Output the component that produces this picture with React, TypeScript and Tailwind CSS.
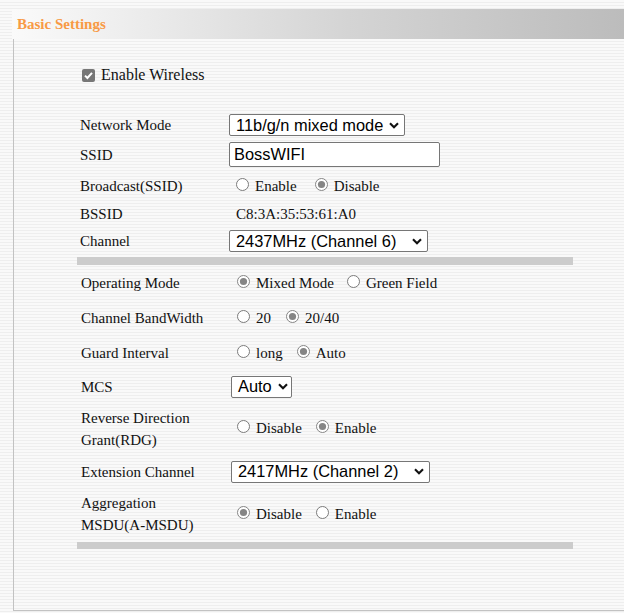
const serif = "font-['Liberation_Serif','Times_New_Roman',serif]";
const sans = "font-['Liberation_Sans',Arial,sans-serif]";

type Opt = { label: string; checked?: boolean; gap?: string };

function Radio({ checked }: { checked?: boolean }) {
  return (
    <svg width="13" height="13" viewBox="0 0 13 13" className="mb-[2px] inline-block shrink-0">
      <circle cx="6.5" cy="6.5" r="6" fill="#fff" stroke={checked ? "#858585" : "#7a7a7a"} />
      {checked ? <circle cx="6.5" cy="6.5" r="3.6" fill="#858585" /> : null}
    </svg>
  );
}

function Radios({ opts, start = "ml-[6px]" }: { opts: Opt[]; start?: string }) {
  return (
    <div className={`flex items-baseline ${start}`}>
      {opts.map((o, i) => (
        <span key={o.label} className={`flex items-baseline ${i > 0 ? o.gap : ""}`}>
          <Radio checked={o.checked} />
          <span className="ml-[6px]">{o.label}</span>
        </span>
      ))}
    </div>
  );
}

function Select({ value, w }: { value: string; w: string }) {
  return (
    <div
      className={`flex h-[22px] items-center justify-between rounded-[2px] border border-[#767676] bg-white pl-[6px] pr-[5px] text-[16.4px] text-black ${sans} ${w}`}
    >
      <span className="whitespace-nowrap leading-none">{value}</span>
      <svg width="10" height="7" viewBox="0 0 10 7" className="ml-[6px] shrink-0">
        <path d="M1 1.3 L5 5.3 L9 1.3" fill="none" stroke="#111" strokeWidth="2.1" />
      </svg>
    </div>
  );
}

function Row({
  h,
  label,
  children,
  second,
}: {
  h: string;
  label: React.ReactNode;
  children: React.ReactNode;
  second?: boolean;
}) {
  return (
    <div className={`flex items-center ${h} ${second ? "pl-[67px]" : "pl-[66px]"}`}>
      <div className={`shrink-0 leading-[22px] ${second ? "w-[150px]" : "w-[149px]"}`}>{label}</div>
      {children}
    </div>
  );
}

export default function App() {
  return (
    <div
      className={`h-[613px] w-[624px] overflow-hidden bg-[repeating-linear-gradient(180deg,#f9f9f9_0px,#f9f9f9_2px,#eeeeee_2px,#eeeeee_3px)] pt-[9px] ${serif}`}
    >
      <div className="ml-[12px] h-[30px] bg-[linear-gradient(90deg,#fafafa_0%,#f0f0f0_15%,#d4d4d4_55%,#bcbcbc_100%)] pl-[5px] text-[15px] font-bold leading-[30px] text-[#f89a45]">
        Basic Settings
      </div>

      <div className="ml-[13px] h-[572px] border-b border-l border-[#c2c2c2] pt-[21px] text-[15px] text-[#111]">
        <div className="flex h-[30px] items-center pl-[68px]">
          <span className="flex h-[13px] w-[13px] items-center justify-center rounded-[2px] bg-[#777777]">
            <svg width="11" height="11" viewBox="0 0 11 11">
              <path d="M2 5.6 L4.4 8 L9 2.8" fill="none" stroke="#fff" strokeWidth="2" />
            </svg>
          </span>
          <span className="ml-[6px] text-[16px]">Enable Wireless</span>
        </div>

        <div className="mt-[21px]">
          <Row h="h-[28px]" label="Network Mode">
            <Select value="11b/g/n mixed mode" w="w-[176px]" />
          </Row>
          <Row h="h-[31px]" label="SSID">
            <div
              className={`flex h-[25px] w-[211px] items-center rounded-[2px] border border-[#767676] bg-white pl-[4px] text-[16.4px] text-black ${sans}`}
            >
              BossWIFI
            </div>
          </Row>
          <Row h="h-[32px]" label="Broadcast(SSID)">
            <Radios
              start="ml-[7px]"
              opts={[
                { label: "Enable" },
                { label: "Disable", checked: true, gap: "ml-[18px]" },
              ]}
            />
          </Row>
          <Row h="h-[24px]" label="BSSID">
            <span className="ml-[7px]">C8:3A:35:53:61:A0</span>
          </Row>
          <Row h="h-[30px]" label="Channel">
            <Select value="2437MHz (Channel 6)" w="w-[199px]" />
          </Row>
        </div>

        <div className="ml-[63px] mt-[1px] h-[8px] w-[496px] bg-[#cccccc]" />

        <Row second h="h-[36px]" label="Operating Mode">
          <Radios
            opts={[
              { label: "Mixed Mode", checked: true },
              { label: "Green Field", gap: "ml-[13px]" },
            ]}
          />
        </Row>
        <Row second h="h-[34px]" label="Channel BandWidth">
          <Radios
            opts={[
              { label: "20" },
              { label: "20/40", checked: true, gap: "ml-[15px]" },
            ]}
          />
        </Row>
        <Row second h="h-[36px]" label="Guard Interval">
          <Radios
            opts={[
              { label: "long" },
              { label: "Auto", checked: true, gap: "ml-[14px]" },
            ]}
          />
        </Row>
        <Row second h="h-[31px]" label="MCS">
          <Select value="Auto" w="w-[61px]" />
        </Row>
        <Row
          second
          h="h-[53px]"
          label={
            <>
              Reverse Direction
              <br />
              Grant(RDG)
            </>
          }
        >
          <Radios
            opts={[
              { label: "Disable" },
              { label: "Enable", checked: true, gap: "ml-[14px]" },
            ]}
          />
        </Row>
        <Row second h="h-[33px]" label="Extension Channel">
          <Select value="2417MHz (Channel 2)" w="w-[199px]" />
        </Row>
        <Row
          second
          h="h-[52px]"
          label={
            <>
              Aggregation
              <br />
              MSDU(A-MSDU)
            </>
          }
        >
          <Radios
            opts={[
              { label: "Disable", checked: true },
              { label: "Enable", gap: "ml-[14px]" },
            ]}
          />
        </Row>

        <div className="ml-[63px] mt-[2px] h-[7px] w-[496px] bg-[#cccccc]" />
      </div>
    </div>
  );
}
